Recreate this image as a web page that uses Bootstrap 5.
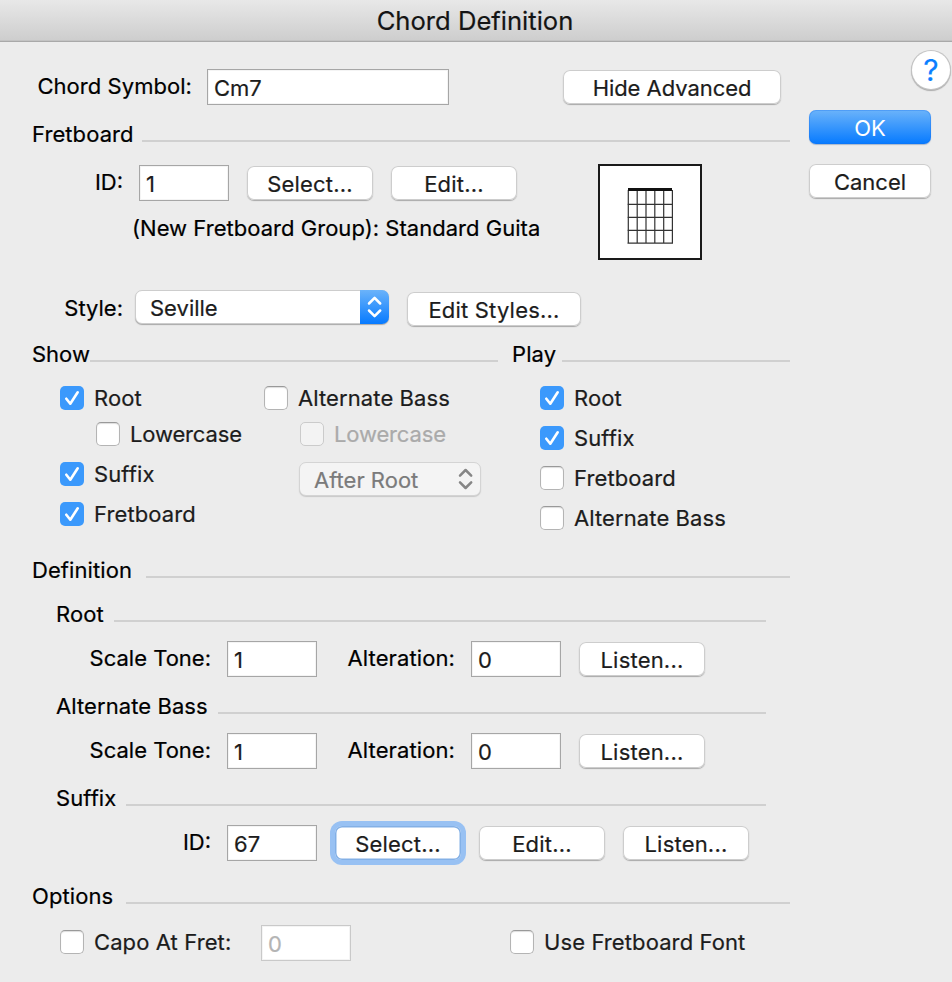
<!DOCTYPE html>
<html lang="en">
<head>
<meta charset="utf-8">
<meta name="viewport" content="width=device-width, initial-scale=1">
<title>Chord Definition</title>
<link href="https://cdn.jsdelivr.net/npm/bootstrap@5.3.0/dist/css/bootstrap.min.css" rel="stylesheet">
<style>
body{font:22px/26px Inter,"Liberation Sans",sans-serif;background:#ececec;color:#000;width:952px;height:982px;overflow:hidden;white-space:nowrap;-webkit-text-stroke:.2px}
.titlebar{height:42px;background:linear-gradient(#e8e8e8,#cdcdcd);border-bottom:1px solid #a9a9a9;box-shadow:inset 0 -1px #c3c3c3;font-size:25.6px;color:#141414;padding-right:2px}
.pane{width:790px;padding-left:32px;flex:none}
.side{width:143px;margin-left:19px;padding-top:10px}
/* section headings: label followed by a rule on the baseline */
.sect{height:26px;letter-spacing:.08px}
.sect::after{content:"";flex:1;height:2px;background:#d0d0d0;margin-top:19px}
.s-fret span{width:110px}.s-show{width:466px;letter-spacing:0}.s-show span{width:58px}.s-play{width:278px}.s-play span{width:50px}
.s-def span{width:114px}.s-root span{width:58px}.s-bass span{width:162px}.s-suf span{width:70px}.s-opt span{width:94px}
/* field rows */
.frow{height:36px}
.lbl{padding-bottom:2px;text-align:right;flex:none}
.l-sym{width:160px;margin-right:15px;letter-spacing:.05px}
.l-id{width:91px;margin-right:16px}
.l-style{width:91px;margin-right:12px;padding-top:5px}
.l-tone{width:155px;margin-right:16px}
.l-alt{width:138px;margin-right:16px;letter-spacing:.1px}
.fld.form-control{width:90px;height:36px;border:1px solid #a6a6a6;border-radius:0;padding:2px 0 0 6px;font:inherit;line-height:26px;color:#1c1c1c;background:#fff;box-shadow:inset 0 0 0 1px #f4f4f4;flex:none}
.fld.f-sym{width:242px}
.fld.form-control:disabled{border-color:#c9c9c9;color:#b4b4b4}
.btn-mac.btn{width:126px;height:34px;padding:1px 0 0;border:0;border-radius:7px;background:#fff;box-shadow:inset 0 0 0 1px #cdcdcd,0 1px 1px #a9a9a9;font:inherit;line-height:32px;color:#1c1c1c;letter-spacing:.2px;flex:none}
.btn-mac.b-adv{width:218px;margin-left:114px;letter-spacing:-.05px}
.btn-mac.b-sty{width:174px}
.btn-mac.b-side{width:122px;letter-spacing:0}
.btn-mac.b-no{margin-top:20px}
.btn-mac.go{background:linear-gradient(#6bb3fa,#067aff);color:#fff;-webkit-text-stroke:0;box-shadow:inset 0 0 0 1px rgba(20,110,240,.3),0 1px 1px #a9b8cc}
.btn-mac.ring{box-shadow:inset 0 0 0 1.5px #83b0e6,0 0 0 5px #98c1f3}
.gap-mac{gap:18px}
.help.btn{width:38px;height:38px;border-radius:50%;background:#fff;border:0;padding:0;box-shadow:0 0 0 1px #c4c4c4,0 1px 1px 1px #aaa;color:#0a7fff;font:inherit;font-size:30px;line-height:36px;margin:-1px 2px 21px 0}
.pop{height:34px;border-radius:7px;background:#fff;box-shadow:0 1px 1px #a9a9a9;border:1px solid #cdcdcd;color:#1c1c1c;padding-left:14px}
.pop span{padding-top:2px}
.p-style{width:254px;margin-right:18px}
.p-style .cap{width:29px;height:34px;margin:-1px;border-radius:0 7px 7px 0;background:linear-gradient(#6bb3fa,#067aff)}
.p-after{width:182px;height:34px;margin-left:35px;background:#f4f4f4;color:#7b7b7b;border-color:#d4d4d4;box-shadow:0 1px 1px #c9c9c9}
.p-after .cap{width:28px;height:34px}
.chk{height:24px;color:#1c1c1c;letter-spacing:.1px}
.chk .form-check-input{width:24px;height:24px;margin:0 10px 0 0;border:1px solid #b4b4b4;border-top-color:#999;border-radius:5px;background-color:#fff;box-shadow:inset 0 1px 1px #ddd;flex:none}
.chk .form-check-input:checked{border:0;background-color:#3b99fc;box-shadow:none;background-size:24px;background-image:url("data:image/svg+xml,%3csvg xmlns='http://www.w3.org/2000/svg' viewBox='0 0 24 24'%3e%3cpath d='M6.3 12.7l4 5L17.7 6.3' fill='none' stroke='%23fff' stroke-width='2.6' stroke-linecap='round' stroke-linejoin='round'/%3e%3c/svg%3e")}
.chk.off{color:#aaa}
.chk.off .form-check-input{background:#f3f3f3;border-color:#cbcbcb;opacity:1;box-shadow:none}
.chk.off span{opacity:1}
.nest{margin:12px 0 16px 36px;letter-spacing:-.15px}
.checks{margin-top:19px;height:144px}
.c-show{width:204px;margin-left:28px}
.c-bass{width:276px}
.group-name{width:408px;margin:14px 0 0 100px;letter-spacing:.03px}
.fretinfo{width:566px;padding-top:1px}
.diagram{width:104px;height:96px;border:2px solid #1a1a1a;background:#fff}
.m14{margin-top:14px}.m15{margin-top:15px}.m16{margin-top:16px}.m17{margin-top:17px}.m18{margin-top:18px}.m22{margin-top:22px}.m27{margin-top:27px}.m30{margin-top:30px}
.indent{padding:0 24px}
.opts .chk{margin-bottom:2px}
.capo{width:201px;margin-left:28px}.usefont{margin-left:159px}
</style>
</head>
<body>
<header class="titlebar d-flex justify-content-center align-items-center">Chord Definition</header>
<div class="d-flex">
<main class="pane">
  <div class="frow d-flex align-items-center m27">
    <label class="lbl l-sym" for="sym">Chord Symbol:</label><input id="sym" class="fld f-sym form-control" value="Cm7">
    <button class="btn btn-mac b-adv">Hide Advanced</button>
  </div>

  <div class="sect s-fret d-flex m16"><span>Fretboard</span></div>
  <div class="d-flex m17">
    <div class="fretinfo">
      <div class="frow d-flex align-items-center">
        <label class="lbl l-id" for="fid">ID:</label>
        <div class="d-flex align-items-center gap-mac"><input id="fid" class="fld form-control" value="1"><button class="btn btn-mac">Select...</button><button class="btn btn-mac">Edit...</button></div>
      </div>
      <div class="group-name">(New Fretboard Group): Standard Guita</div>
    </div>
    <svg class="diagram" viewBox="0 0 100 92"><path d="M28.3 24v53M37.2 24v53M46 24v53M54.8 24v53M63.7 24v53M72.4 24v53M27.5 38.3h45.5M27.5 51.3h45.5M27.5 64.3h45.5M27.5 77.2h45.5" fill="none" stroke="#333" stroke-width="1.2"/><path d="M28 22h44v3H28z" fill="#111"/></svg>
  </div>

  <div class="frow d-flex align-items-start m30">
    <label class="lbl l-style">Style:</label>
    <div class="pop p-style d-flex align-items-center justify-content-between"><span>Seville</span>
      <svg class="cap" viewBox="0 0 29 34"><path d="M9 13.5l5.6-5.7 5.6 5.7M9 20.5l5.6 5.7 5.6-5.7" fill="none" stroke="#fff" stroke-width="2.5" stroke-linecap="round" stroke-linejoin="round"/></svg></div>
    <button class="btn btn-mac b-sty align-self-end">Edit Styles...</button>
  </div>

  <div class="d-flex justify-content-between m15"><div class="sect s-show d-flex"><span>Show</span></div><div class="sect s-play d-flex"><span>Play</span></div></div>
  <div class="checks d-flex align-items-start">
    <div class="c-show">
      <label class="chk d-flex align-items-center"><input type="checkbox" class="form-check-input" checked><span>Root</span></label>
      <label class="chk nest d-flex align-items-center"><input type="checkbox" class="form-check-input"><span>Lowercase</span></label>
      <label class="chk d-flex align-items-center"><input type="checkbox" class="form-check-input" checked><span>Suffix</span></label>
      <label class="chk d-flex align-items-center m16"><input type="checkbox" class="form-check-input" checked><span>Fretboard</span></label>
    </div>
    <div class="c-bass">
      <label class="chk d-flex align-items-center"><input type="checkbox" class="form-check-input"><span>Alternate Bass</span></label>
      <label class="chk off nest d-flex align-items-center"><input type="checkbox" class="form-check-input" disabled><span>Lowercase</span></label>
      <div class="pop p-after d-flex align-items-center justify-content-between"><span>After Root</span>
        <svg class="cap" viewBox="0 0 28 34"><path d="M8 13.7l5.6-5.7 5.6 5.7M8 20.3l5.6 5.7 5.6-5.7" fill="none" stroke="#868686" stroke-width="2.5" stroke-linecap="round" stroke-linejoin="round"/></svg></div>
    </div>
    <div class="d-flex flex-column gap-3">
      <label class="chk d-flex align-items-center"><input type="checkbox" class="form-check-input" checked><span>Root</span></label>
      <label class="chk d-flex align-items-center"><input type="checkbox" class="form-check-input" checked><span>Suffix</span></label>
      <label class="chk d-flex align-items-center"><input type="checkbox" class="form-check-input"><span>Fretboard</span></label>
      <label class="chk d-flex align-items-center"><input type="checkbox" class="form-check-input"><span>Alternate Bass</span></label>
    </div>
  </div>

  <div class="sect s-def d-flex m27"><span>Definition</span></div>
  <div class="indent">
    <div class="sect s-root d-flex m18"><span>Root</span></div>
    <div class="frow d-flex align-items-center m14">
      <label class="lbl l-tone">Scale Tone:</label><input class="fld form-control" value="1"><label class="lbl l-alt">Alteration:</label>
      <div class="d-flex align-items-center gap-mac"><input class="fld form-control" value="0"><button class="btn btn-mac">Listen...</button></div>
    </div>
    <div class="sect s-bass d-flex m16"><span>Alternate Bass</span></div>
    <div class="frow d-flex align-items-center m14">
      <label class="lbl l-tone">Scale Tone:</label><input class="fld form-control" value="1"><label class="lbl l-alt">Alteration:</label>
      <div class="d-flex align-items-center gap-mac"><input class="fld form-control" value="0"><button class="btn btn-mac">Listen...</button></div>
    </div>
    <div class="sect s-suf d-flex m16"><span>Suffix</span></div>
    <div class="frow d-flex align-items-center m14">
      <label class="lbl l-tone">ID:</label>
      <div class="d-flex align-items-center gap-mac"><input class="fld form-control" value="67"><button class="btn btn-mac ring">Select...</button><button class="btn btn-mac">Edit...</button><button class="btn btn-mac">Listen...</button></div>
    </div>
  </div>

  <div class="sect s-opt d-flex m22"><span>Options</span></div>
  <div class="frow opts d-flex align-items-center m16">
    <label class="chk capo d-flex align-items-center"><input type="checkbox" class="form-check-input"><span>Capo At Fret:</span></label>
    <input class="fld form-control" value="0" disabled>
    <label class="chk usefont d-flex align-items-center"><input type="checkbox" class="form-check-input"><span>Use Fretboard Font</span></label>
  </div>
</main>
<aside class="side d-flex flex-column align-items-start">
  <button class="btn help align-self-end">?</button>
  <button class="btn btn-mac b-side go">OK</button>
  <button class="btn btn-mac b-side b-no">Cancel</button>
</aside>
</div>
<script src="https://cdn.jsdelivr.net/npm/bootstrap@5.3.0/dist/js/bootstrap.bundle.min.js"></script>
</body>
</html>
